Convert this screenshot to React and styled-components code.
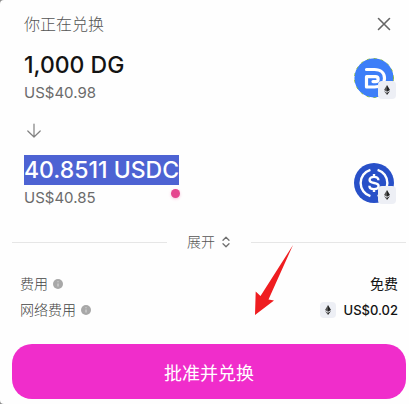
import React from "react";
import styled, { createGlobalStyle } from "styled-components";

const GlobalStyle = createGlobalStyle`
  * { box-sizing: border-box; }
  body {
    margin: 0;
    background: #8c8c8c;
    color: #131313;
    font-family: Inter, "Noto Sans CJK SC", sans-serif;
  }
  button { font: inherit; border: 0; padding: 0; cursor: pointer; }
`;

const Dialog = styled.main`
  position: relative;
  padding: 12px 3px 5px 12px;
  background: #fefefe;
  border-radius: 4px 0 0 4px;
`;

const Header = styled.header`
  display: flex;
  align-items: center;
  justify-content: space-between;
  padding: 0 12px;
  height: 24px;
`;

const Title = styled.h1`
  margin: 0;
  font-size: 16px;
  font-weight: 300;
  line-height: 24px;
  color: #555;
`;

const CloseButton = styled.button`
  display: flex;
  align-items: center;
  justify-content: center;
  width: 20px;
  height: 20px;
  background: none;
  color: #666;
`;

const Swap = styled.section`
  display: flex;
  flex-direction: column;
  gap: 16px;
  padding: 14px 12px 0;
`;

const TokenRow = styled.div`
  display: flex;
  align-items: center;
  justify-content: space-between;
`;

const Amount = styled.div`
  width: fit-content;
  font-size: 23px;
  font-weight: 500;
  line-height: 30px;
  color: ${(p) => (p.$selected ? "#fff" : "#131313")};
  background: ${(p) => (p.$selected ? "#4d63d3" : "transparent")};
`;

const FiatLine = styled.div`
  position: relative;
  font-size: 15px;
  line-height: 26px;
  color: #6b6b6b;
`;

const CursorDot = styled.span`
  position: absolute;
  top: 4px;
  right: -1px;
  width: 9px;
  height: 9px;
  border-radius: 50%;
  background: #e5468f;
  box-shadow: 0 1px 3px #e5468f55;
`;

const TokenIcon = styled.div`
  position: relative;
  width: 40px;
  height: 40px;
  > svg { display: block; }
`;

const ChainBadge = styled.span`
  display: flex;
  align-items: center;
  justify-content: center;
  width: ${(p) => (p.$overlay ? 18 : 16)}px;
  height: ${(p) => (p.$overlay ? 18 : 16)}px;
  border-radius: 4px;
  background: #edeff5;
  ${(p) => p.$overlay && "position: absolute; right: -2px; bottom: -1px;"}
`;

const DownArrow = styled.svg`
  display: block;
  margin: 0 2px;
`;

const ExpandRow = styled.div`
  display: flex;
  align-items: center;
  gap: 20px;
  margin-top: 19px;
  &::before, &::after {
    content: "";
    flex: 1;
    height: 1px;
    background: #e6e6e6;
  }
`;

const ExpandButton = styled.button`
  display: flex;
  align-items: center;
  gap: 6px;
  background: none;
  font-size: 14px;
  font-weight: 300;
  line-height: 24px;
  color: #555;
`;

const Fees = styled.dl`
  margin: 17px 0 21px;
  padding: 0 8px;
`;

const FeeRow = styled.div`
  display: flex;
  align-items: center;
  justify-content: space-between;
  font-size: 14px;
  line-height: 26px;
`;

const FeeLabel = styled.dt`
  display: flex;
  align-items: center;
  gap: 5px;
  font-weight: 300;
  color: #444;
`;

const FeeValue = styled.dd`
  display: flex;
  align-items: center;
  gap: 8px;
  margin: 0;
`;

const NetworkCost = styled.span`
  font-size: 13px;
  font-weight: 500;
`;

const ApproveButton = styled.button`
  display: block;
  width: 100%;
  height: 55px;
  border-radius: 20px;
  background: #f02dcb;
  color: #fff;
  && { font-size: 18px; }
`;

const Pointer = styled.svg`
  position: absolute;
  left: 254px;
  top: 244px;
  pointer-events: none;
`;

function Ether() {
  return (
    <svg width="8" height="10" viewBox="0 0 8 10" aria-hidden="true">
      <path d="M4 0 1 5 4 6.8Z" fill="#555" />
      <path d="M4 0 7 5 4 6.8Z" fill="#222" />
      <path d="M1 5.9 4 10V7.7Z" fill="#555" />
      <path d="M7 5.9 4 10V7.7Z" fill="#222" />
    </svg>
  );
}

function DgLogo() {
  return (
    <svg width="40" height="40" viewBox="0 0 40 40" role="img" aria-label="DG">
      <circle cx="20" cy="20" r="19.5" fill="#3d7ef8" stroke="#8fc03a" strokeWidth="1" strokeDasharray="3 4" />
      <circle cx="20" cy="20" r="19.2" fill="#3d7ef8" />
      <path
        d="M12.5 11.5H20.5C26.5 11.5 30.5 15 30.5 20.3S26.5 29 20.5 29H12.5V18.7H21.5C25 18.7 25 23.6 21.5 23.6H19"
        fill="none" stroke="#fff" strokeWidth="3.2" strokeLinecap="round" strokeLinejoin="round"
      />
    </svg>
  );
}

function UsdcLogo() {
  return (
    <svg width="40" height="40" viewBox="0 0 40 40" role="img" aria-label="USDC">
      <circle cx="20" cy="20" r="20" fill="#2850c8" />
      <g fill="none" stroke="#fff" strokeWidth="2.4">
        <path d="M16.4 6.8A13.8 13.8 0 0 0 16.4 33.2" />
        <path d="M23.6 6.8A13.8 13.8 0 0 1 23.6 33.2" />
        <path d="M24.4 17.2C24.4 14.9 22.7 13.9 20 13.9C17.3 13.9 15.6 15.1 15.6 17C15.6 21.4 24.6 18.6 24.6 23C24.6 25.1 22.8 26.1 20 26.1C17.2 26.1 15.4 25 15.4 22.7M20 11V14M20 26V29" />
      </g>
    </svg>
  );
}

function Info() {
  return (
    <svg width="10" height="10" viewBox="0 0 10 10" aria-hidden="true">
      <circle cx="5" cy="5" r="5" fill="#a8a8a8" />
      <path d="M5 2.3V3.3M5 4.5V7.5" stroke="#d5d5d5" strokeWidth="1.2" />
    </svg>
  );
}

export default function App() {
  return (
    <>
      <GlobalStyle />
      <Dialog>
        <Header>
          <Title>你正在兑换</Title>
          <CloseButton aria-label="关闭">
            <svg width="14" height="14" viewBox="0 0 14 14" fill="none" stroke="currentColor" strokeWidth="1.6" strokeLinecap="round">
              <path d="M1.5 1.5 12.5 12.5M12.5 1.5 1.5 12.5" />
            </svg>
          </CloseButton>
        </Header>

        <Swap>
          <TokenRow>
            <div>
              <Amount>1,000 DG</Amount>
              <FiatLine>US$40.98</FiatLine>
            </div>
            <TokenIcon>
              <DgLogo />
              <ChainBadge $overlay><Ether /></ChainBadge>
            </TokenIcon>
          </TokenRow>
          <DownArrow width="16" height="17" viewBox="0 0 16 17" fill="none" stroke="#808080" strokeWidth="1.2" strokeLinecap="round" strokeLinejoin="round">
            <path d="M8 2V15M1.8 9 8 15 14.2 9" />
          </DownArrow>
          <TokenRow>
            <div>
              <Amount $selected>40.8511 USDC</Amount>
              <FiatLine>US$40.85<CursorDot /></FiatLine>
            </div>
            <TokenIcon>
              <UsdcLogo />
              <ChainBadge $overlay><Ether /></ChainBadge>
            </TokenIcon>
          </TokenRow>
        </Swap>

        <ExpandRow>
          <ExpandButton>
            展开
            <svg width="10" height="12" viewBox="0 0 10 12" fill="none" stroke="#707070" strokeWidth="1.3" strokeLinecap="round" strokeLinejoin="round">
              <path d="M2 4.2 5 1.2 8 4.2M2 7.8 5 10.8 8 7.8" />
            </svg>
          </ExpandButton>
        </ExpandRow>

        <Fees>
          <FeeRow>
            <FeeLabel>费用 <Info /></FeeLabel>
            <FeeValue>免费</FeeValue>
          </FeeRow>
          <FeeRow>
            <FeeLabel>网络费用 <Info /></FeeLabel>
            <FeeValue>
              <ChainBadge><Ether /></ChainBadge>
              <NetworkCost>US$0.02</NetworkCost>
            </FeeValue>
          </FeeRow>
        </Fees>

        <ApproveButton>批准并兑换</ApproveButton>

        <Pointer width="40" height="72" viewBox="0 0 40 72" aria-hidden="true">
          <path d="M39 1 14.5 55.5 20 56.5 1 71 1.7 47.5 6.5 52Z" fill="#ef1d20" />
        </Pointer>
      </Dialog>
    </>
  );
}
